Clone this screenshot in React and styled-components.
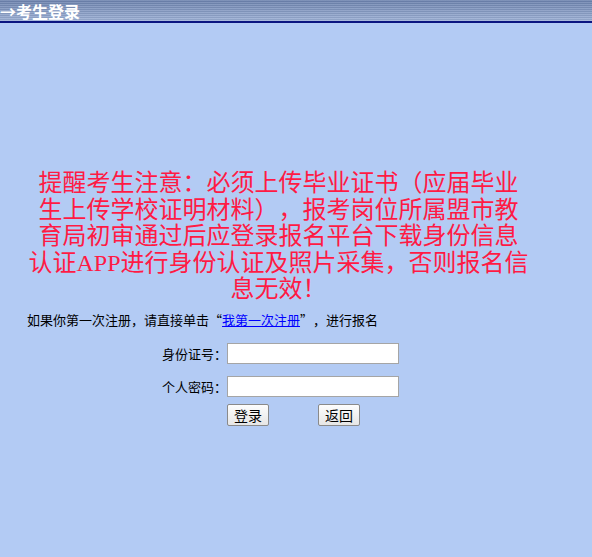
import React from "react";
import styled, { createGlobalStyle } from "styled-components";

const GlobalStyle = createGlobalStyle`
  html, body {
    margin: 0;
    padding: 0;
    background: #b3cbf4;
  }
  body {
    font-family: "Noto Sans CJK SC", "Liberation Sans", sans-serif;
    font-size: 13px;
    color: #000;
    text-spacing-trim: space-all;
  }
`;

const App = () => {
  return (
    <Page>
      <GlobalStyle />
      <TitleBar>
        <Title>→考生登录</Title>
      </TitleBar>
      <Main>
        <Notice>
          提醒考生注意：必须上传毕业证书（应届毕业生上传学校证明材料），报考岗位所属盟市教育局初审通过后应登录报名平台下载身份信息认证APP进行身份认证及照片采集，否则报名信息无效！
        </Notice>
        <Hint>
          如果你第一次注册，请直接单击<Quote $open>“</Quote>
          <HintLink href="#">我第一次注册</HintLink>
          <Quote>”</Quote>，进行报名
        </Hint>
        <Form onSubmit={(e) => e.preventDefault()}>
          <Label>身份证号：</Label>
          <Input type="text" />
          <Label>个人密码：</Label>
          <Input type="password" />
          <span />
          <Buttons>
            <Button type="submit">登录</Button>
            <Button type="button">返回</Button>
          </Buttons>
        </Form>
      </Main>
    </Page>
  );
};

export default App;

const Page = styled.div`
  min-height: 557px;
  background: #b3cbf4;
`;

const TitleBar = styled.div`
  height: 21px;
  border-bottom: 2px solid #0a1580;
  background:
    repeating-linear-gradient(
      to bottom,
      rgba(255, 255, 255, 0.12) 0px,
      rgba(255, 255, 255, 0.12) 1px,
      rgba(0, 0, 0, 0.06) 1px,
      rgba(0, 0, 0, 0.06) 2px
    ),
    linear-gradient(to bottom, #6c82ae, #9db1d6);
  display: flex;
  align-items: center;
`;

const Title = styled.div`
  color: #fff;
  font-family: "Noto Sans CJK SC", sans-serif;
  font-size: 16px;
  font-weight: bold;
  line-height: 20px;
  white-space: nowrap;
`;

const Main = styled.div`
  padding-top: 147px;
`;

const Notice = styled.div`
  width: 503px;
  margin-left: 27px;
  text-align: center;
  color: #ff1a44;
  font-family: "Liberation Serif", "Noto Sans CJK SC", serif;
  font-size: 24px;
  line-height: 26.5px;
`;

const Hint = styled.div`
  margin: 7px 0 0 27px;
  font-size: 13px;
  line-height: 20px;
  font-family: "Noto Sans CJK SC", sans-serif;
  white-space: nowrap;
`;

const Quote = styled.span`
  display: inline-block;
  width: 13px;
  text-align: ${(p) => (p.$open ? "right" : "left")};
`;

const HintLink = styled.a`
  color: #0000ff;
  text-decoration: underline;
`;

const Form = styled.form`
  display: grid;
  grid-template-columns: 227px 174px;
  row-gap: 12px;
  align-items: center;
  margin-top: 13px;
`;

const Label = styled.label`
  text-align: right;
  font-size: 13px;
  font-family: "Noto Sans CJK SC", sans-serif;
`;

const Input = styled.input`
  box-sizing: border-box;
  width: 172px;
  height: 21px;
  margin: 0;
  border: 1px solid #a5a5a5;
  background: #fff;
  padding: 1px 2px;
`;

const Buttons = styled.div`
  display: flex;
  gap: 49px;
  margin-top: -5px;
`;

const Button = styled.button`
  box-sizing: border-box;
  width: 42px;
  height: 22px;
  padding: 0;
  border: 1px solid #8a8a8a;
  border-radius: 2px;
  background: linear-gradient(to bottom, #fdfdfd, #e6e6e6);
  font-family: "Noto Sans CJK SC", sans-serif;
  font-size: 14px;
  color: #000;
  line-height: 20px;
`;
